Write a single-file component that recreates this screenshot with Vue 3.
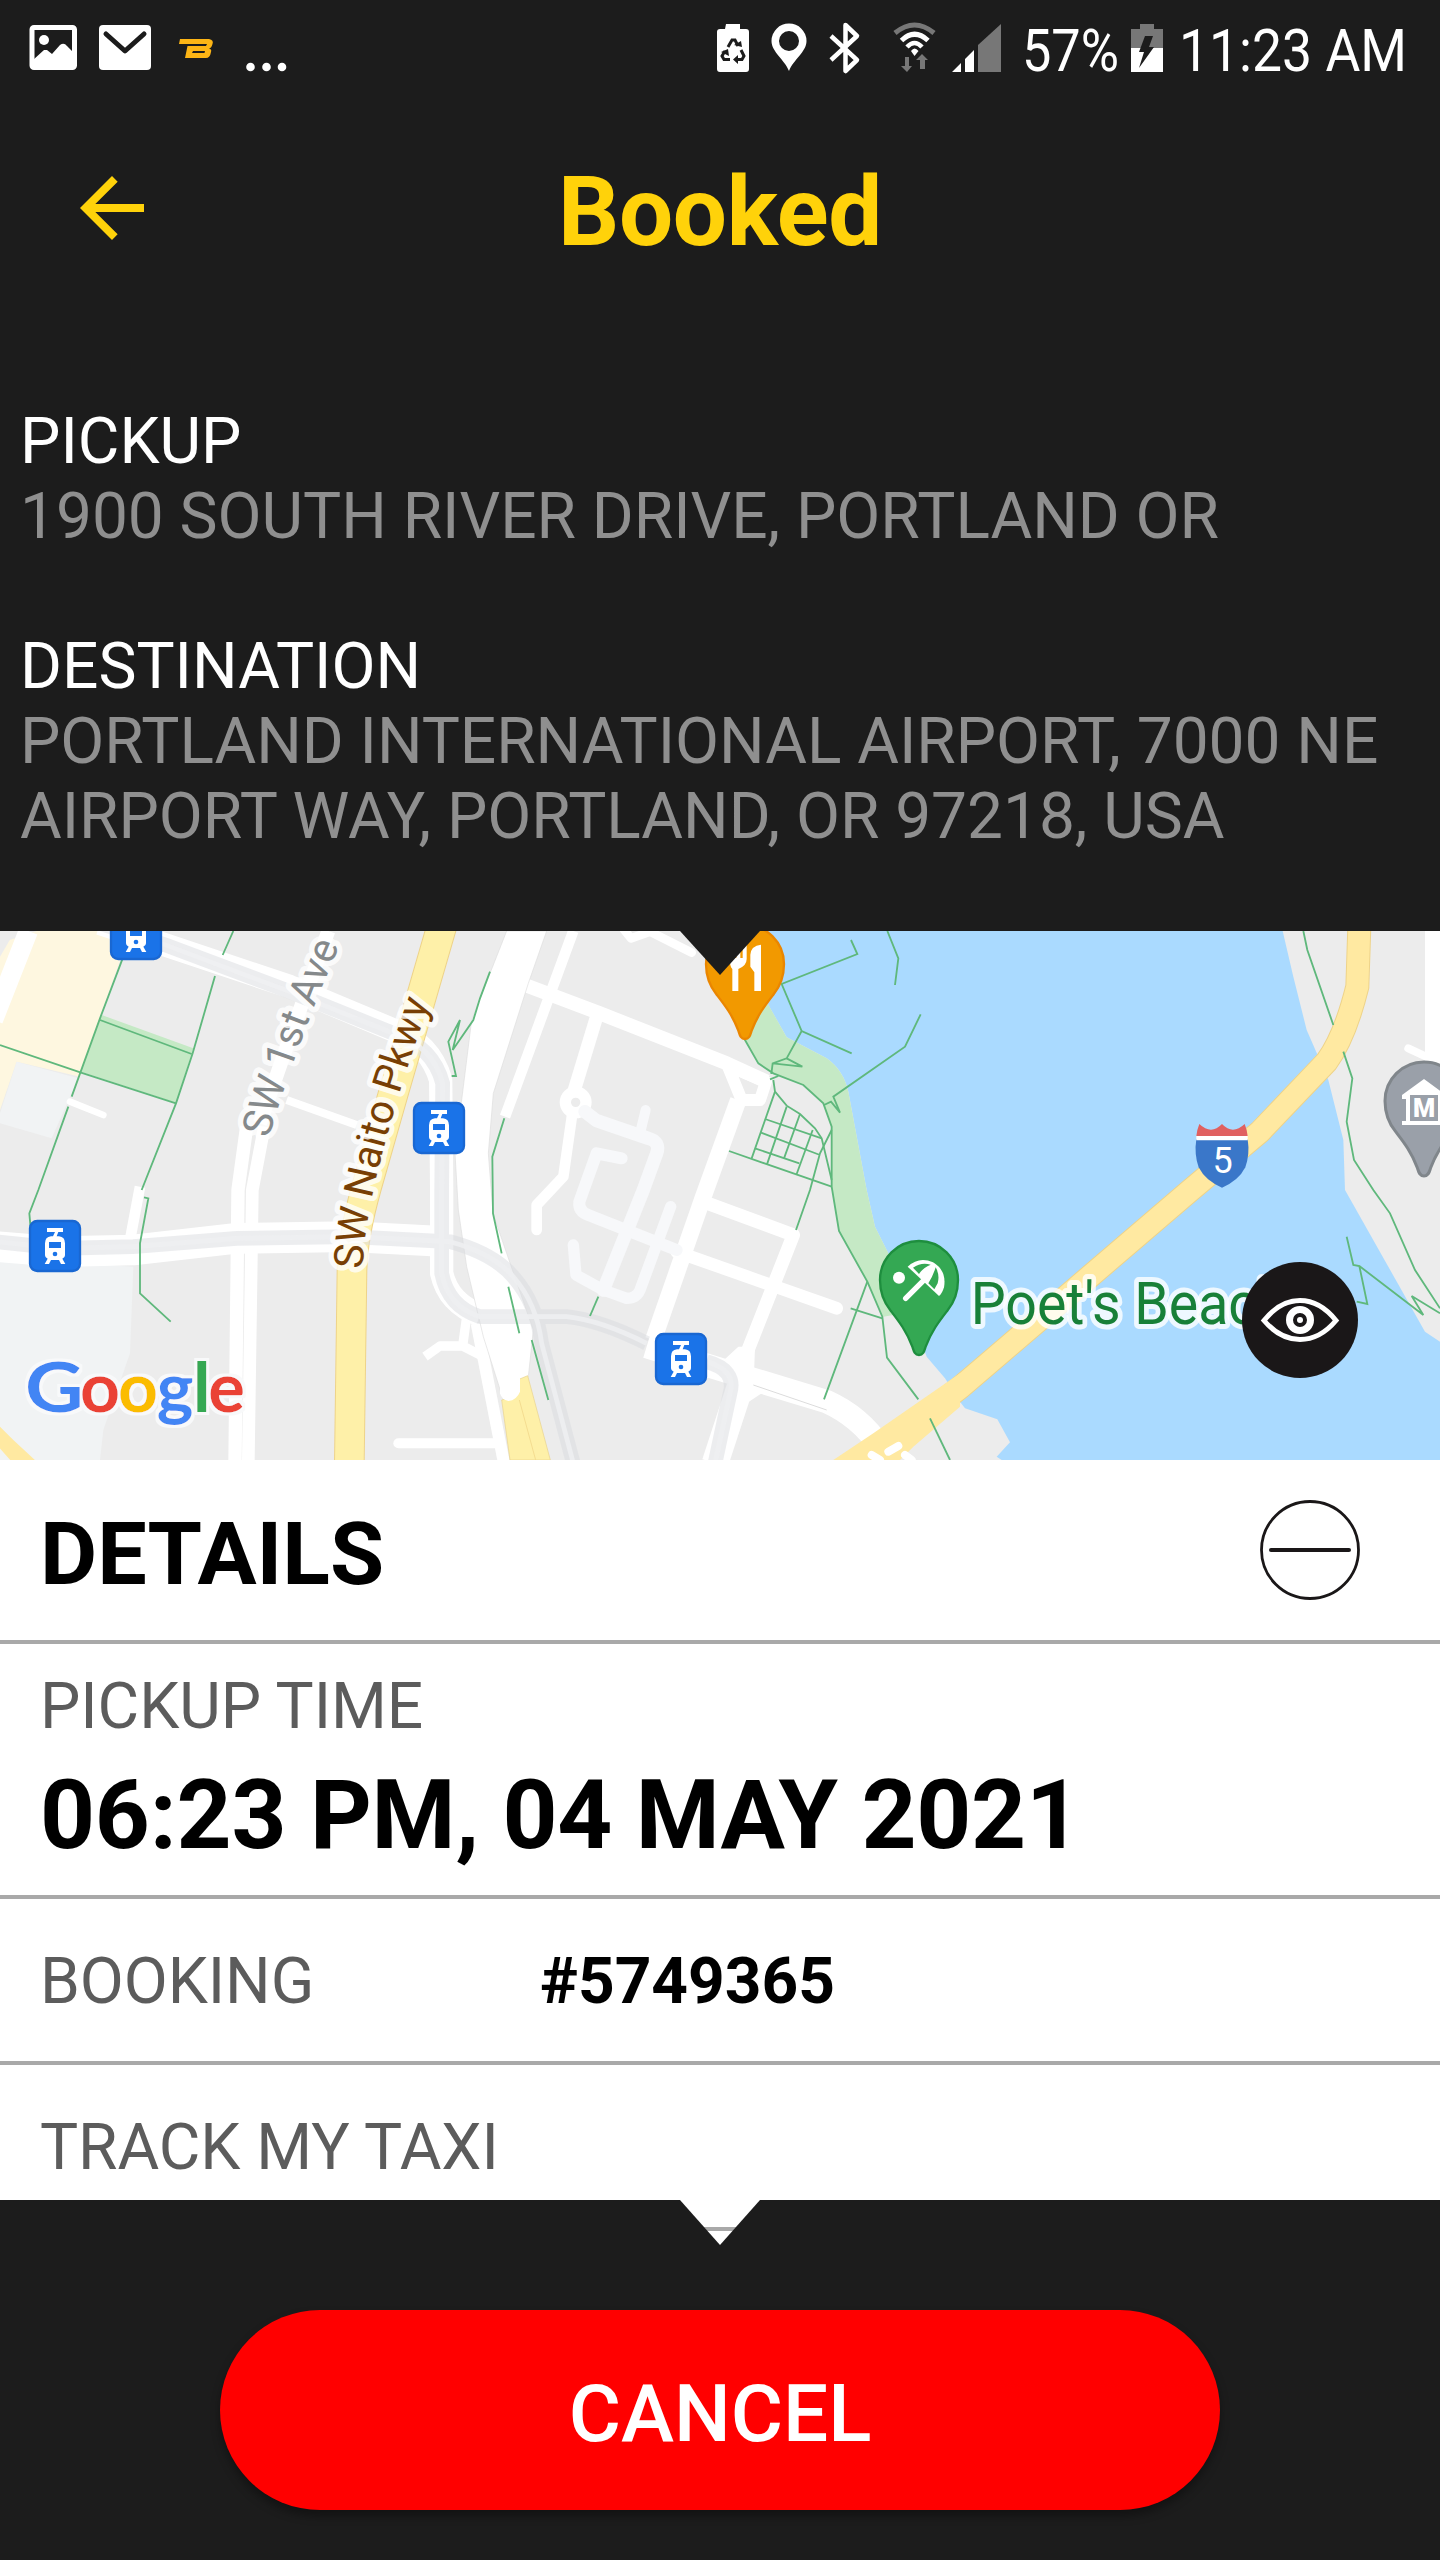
<template>
  <div class="screen">
    <div class="status-bar">
      <svg class="status-icons" viewBox="0 0 1440 96">
        <!-- notifications -->
        <rect x="32" y="27.500" width="42.500" height="40" rx="2" fill="none" stroke="#fff" stroke-width="5" />
        <path fill="#fff" d="M33 60 L44 50 L47 50 L52 54 L60 45 Q64 42 67 46 L74 53 L74 68 L33 68 Z" />
        <circle cx="44" cy="40" r="5" fill="#fff" />
        <rect x="99" y="25" width="52" height="45" rx="4" fill="#fff" />
        <path d="M106 34 L125 51 L144 34" fill="none" stroke="#1c1c1c" stroke-width="5" stroke-linecap="round" stroke-linejoin="round" />
        <path fill="#fdb515" fill-rule="evenodd" d="M180 39 H209 Q214 40 212.500 44 Q211.500 48 209 48.500 Q212 49 211 52 Q210 58 206 58 H185 L187.500 46 H206 L207 44 H179 Z M193 51 H205 L204.500 53 H192 Z" />
        <circle v-for="x in [250.500, 266.500, 282]" :key="x" :cx="x" cy="67" r="4.300" fill="#fff" />
        <!-- system -->
        <path fill="#fff" d="M726 24 H740 V29 H746 Q749 29 749 32 V69 Q749 72 746 72 H720 Q717 72 717 69 V32 Q717 29 720 29 H725 Z" />
        <g fill="none" stroke="#1c1c1c" stroke-width="3">
          <path d="M728 47 L732 40 H735 L738 46" />
          <path d="M741 50 L744 56 L742 59.500 H736" />
          <path d="M730 59.500 H724 L722 56 L725 51" />
        </g>
        <path fill="#1c1c1c" d="M734 45 L742 47 L741 41 Z M738 55 V64 L733 59.500 Z M721 52 L728 49 L729 56 Z" />
        <path fill="#fff" fill-rule="evenodd" d="M789 71 C785 60 771.500 52 771.500 41 A17.500 17.500 0 0 1 806.500 41 C806.500 52 793 60 789 71 Z M789 31 A9.500 9.500 0 1 0 789 51 A9.500 9.500 0 1 0 789 31 Z" />
        <path d="M831 36 L857 60 L845.500 71 V25 L857 36 L831 60" fill="none" stroke="#fff" stroke-width="4.500" stroke-linejoin="round" />
        <g fill="none">
          <path d="M895 33 Q914.500 17 934 33" stroke="#777" stroke-width="5" />
          <path d="M901.500 40.500 Q914.500 28 928 40.500" stroke="#fff" stroke-width="5" />
          <path d="M907 47 Q914.500 39 922 47" stroke="#fff" stroke-width="4.500" />
        </g>
        <path fill="#fff" d="M911 51 Q914.500 46 918.500 51 L914.500 56 Z" />
        <path fill="#777" d="M905 57 H909 V66 H912 L907 72 L901 66 H905 Z M920 69 V60 H916 L922 54 L928 60 H925 V69 Z" />
        <path fill="#777" d="M978 45 L1001 24 V72 H978 Z" />
        <path fill="#fff" d="M952 72 L961 63 V72 Z M965 59 L974 50 V72 H965 Z" />
        <path fill="#777" d="M1140 24 H1154 V29 H1163 V48 H1131 V29 H1140 Z" />
        <path fill="#fff" d="M1131 48 H1163 V72 H1131 Z" />
        <path fill="#1c1c1c" d="M1145 36 H1153 L1149 47 H1154 L1139 68 L1144 52 H1139 Z" />
        <text class="status-text" x="1022" y="71" textLength="97" lengthAdjust="spacingAndGlyphs">57%</text>
        <text class="status-text" x="1179" y="71" textLength="228" lengthAdjust="spacingAndGlyphs">11:23 AM</text>
      </svg>
    </div>

    <header class="toolbar">
      <button class="back" aria-label="Back">
        <svg viewBox="0 0 24 24">
          <path fill="#ffd20a" d="M20 11H7.830l5.590-5.590L12 4l-8 8 8 8 1.410-1.410L7.830 13H20v-2z" />
        </svg>
      </button>
      <h1>Booked</h1>
    </header>

    <section class="route">
      <div v-for="stop in stops" :key="stop.label" class="stop">
        <div class="stop-label">{{ stop.label }}</div>
        <div class="stop-address">{{ stop.address }}</div>
      </div>
    </section>

    <section class="map">
      <svg class="map-canvas" viewBox="0 33 4320 1587">
        <defs>
          <path id="pin" d="M0 225 C-14 225 -16 212 -20 200 C-38 152 -62 122 -85 92 C-108 64 -117 35 -117 0 A117 117 0 0 1 117 0 C117 35 108 64 85 92 C62 122 38 152 20 200 C16 212 14 225 0 225 Z" />
          <path id="first-ave" d="M806 656 Q890 370 1030 50" />
          <path id="naito" d="M1088 1048 C1093 860 1175 560 1310 190" />
          <filter id="halo" x="-10%" y="-20%" width="120%" height="140%">
            <feMorphology in="SourceAlpha" operator="dilate" radius="8" />
            <feGaussianBlur stdDeviation="2" result="grow" />
            <feFlood flood-color="#f8f9fa" />
            <feComposite in2="grow" operator="in" />
            <feMerge>
              <feMergeNode />
              <feMergeNode in="SourceGraphic" />
            </feMerge>
          </filter>
        </defs>

        <rect y="33" width="4320" height="1587" fill="#ececec" />
        <!-- blocks -->
        <path fill="#fef7e0" d="M110 33 H392 L300 290 L240 470 L50 425 L0 570 V70 Z" />
        <path fill="#ececec" d="M0 33 H45 L0 110 Z" />
        <path fill="#f1f3f4" d="M50 425 L235 475 L155 655 L0 610 V580 Z M0 1015 L400 1040 L390 1300 L310 1530 L300 1620 H0 Z" />
        <path fill="#c5e9c5" d="M305 285 L580 385 L528 548 L243 455 Z" />
        <!-- river -->
        <path fill="#aadaff" d="M2250 33 L2305 255 L2360 352 L2480 415 Q2530 450 2545 515 L2600 810 L2625 920 L2670 1010 L2780 1310 L2835 1375 L2880 1445 L2895 1465 L2992 1498 L3030 1567 L2990 1610 L3005 1620 H4320 V1265 L4275 1235 L4035 810 L4030 660 L3985 480 L3942 380 L3920 330 L3880 170 L3848 33 Z" />
        <path fill="#c5e9c5" d="M2180 200 L2300 245 L2360 352 L2480 415 Q2530 450 2545 515 L2600 810 L2625 920 L2665 1000 L2710 1180 L2650 1190 L2600 1085 L2515 930 L2495 800 V620 L2470 550 L2410 495 L2320 460 L2275 430 L2235 360 Z" />

        <!-- streets -->
        <g class="street">
          <path d="M85 33 L-20 300" stroke-width="58" />
          <path d="M210 545 L310 585" stroke-width="20" stroke-linecap="round" />
          <path d="M420 800 L390 960" stroke-width="32" />
          <path d="M-10 980 L180 995 L400 990 L710 955 L1050 950 L1340 965" stroke-width="92" />
          <path d="M300 10 L500 76 L870 200 L1180 330 Q1290 370 1322 480 L1325 810 V1060 Q1345 1150 1440 1185" stroke-width="70" />
          <path d="M985 33 L860 380 L780 610" stroke-width="42" />
          <path d="M740 620 L714 810 L705 1620" stroke-width="40" />
          <path d="M793 620 L757 810 L745 1620" stroke-width="38" />
          <path d="M860 540 L1070 615" stroke-width="24" />
          <path d="M1275 1310 L1320 1278 H1388 L1450 1310 M1400 1190 L1388 1278" stroke-width="28" />
          <path d="M1195 1570 H1500" stroke-width="30" stroke-linecap="round" />
          <path d="M1430 1210 L1512 1630" stroke-width="36" />
          <path d="M1720 33 L1515 590" stroke-width="32" />
          <path d="M1575 195 L1800 280 L2180 430 L2300 485" stroke-width="42" />
          <path d="M1790 290 L1720 520" stroke-width="40" />
          <circle cx="1727" cy="547" r="31" stroke-width="34" />
          <path d="M1717 580 L1690 770 L1610 855 V930" stroke-width="32" stroke-linecap="round" />
          <path d="M1865 20 L1893 55 L1950 35 L2075 98" stroke-width="26" stroke-linecap="round" />
          <path d="M2180 430 L2225 540 H2280 L2298 485 L2190 440" stroke-width="36" />
          <path d="M2215 540 L2110 830 L1960 1260" stroke-width="50" />
          <path d="M2110 845 L2380 945 L2240 1300 L2200 1370" stroke-width="40" />
          <path d="M2030 995 L2510 1165" stroke-width="38" stroke-linecap="round" />
          <path d="M1940 1280 L2200 1360 L2480 1445 Q2580 1490 2640 1580" stroke-width="70" />
          <path d="M2230 1370 L2145 1630" stroke-width="80" />
          <path d="M4300 33 V440" stroke-width="50" />
          <path d="M4225 385 L4300 420" stroke-width="24" stroke-linecap="round" />
        </g>
        <path fill="#fff" d="M2215 1280 L2265 1280 L2262 1365 L2330 1390 L2240 1450 L2150 1340 Z" />
        <path fill="#fff" stroke="#dedede" stroke-width="2" d="M1520 33 L1415 300 L1365 700 L1375 870 L1400 1040 L1450 1250 L1510 1440 L1545 1430 L1555 1380 L1585 1370 L1600 1230 L1520 1000 L1479 880 L1465 700 L1480 520 L1585 190 L1640 33 Z" />
        <path d="M2260 1395 L2480 1470" stroke="#dcdcdc" stroke-width="3" />
        <g fill="none" stroke="#f7f8fa" stroke-width="40" stroke-linecap="round" stroke-linejoin="round">
          <path d="M1755 575 L1790 602 L1945 655 Q1982 665 1970 700 L1930 810 L1810 1110" />
          <path d="M1920 640 L1937 570" stroke-width="30" />
          <path d="M1865 715 L1790 700 L1738 845 Q1735 875 1765 885 L2030 990" stroke-width="36" />
          <path d="M1720 975 L1728 1065 L1810 1110 L1880 1135 Q1910 1135 1920 1110 L2012 860" stroke-width="34" />
        </g>

        <!-- highways -->
        <g class="highway">
          <path class="casing" d="M1325 20 L1180 520 L1100 800 Q1058 950 1056 1050 L1048 1630" stroke-width="92" />
          <path class="fill" d="M1325 20 L1180 520 L1100 800 Q1058 950 1056 1050 L1048 1630" stroke-width="86" />
          <path class="casing" d="M2560 1650 L2880 1403 L3570 812 L3780 635 L3980 425 Q4035 350 4072 200 L4078 20" stroke-width="72" />
          <path class="fill deep" d="M2560 1650 L2880 1403 L3570 812 L3780 635 L3980 425 Q4035 350 4072 200 L4078 20" stroke-width="66" />
        </g>
        <path fill="#ffe9a1" d="M2500 1620 L2620 1540 L2880 1360 V1460 L2740 1580 L2700 1620 Z" />
        <path fill="#fef0a8" stroke="#e8d28c" stroke-width="2" d="M1505 1440 L1530 1620 H1651 L1583 1367 L1552 1380 L1543 1430 Z" />
        <path d="M1558 1440 L1607 1620" stroke="#f4dc90" stroke-width="3" />
        <path fill="#fff" d="M1500 1360 H1560 V1415 Q1550 1440 1525 1443 Q1505 1440 1500 1420 Z" />
        <path fill="#ffe9a1" d="M-5 1515 L40 1560 L110 1625 H35 L-5 1580 Z" />
        <path d="M2615 1605 L2640 1620 M2665 1595 L2695 1578 M2715 1605 L2735 1620" stroke="#fff" stroke-width="24" stroke-linecap="round" />

        <!-- bridges over the streets -->
        <g class="rail">
          <path v-for="(line, i) in railLines" :key="i" :d="line" />
        </g>
        <g class="rail rail--core">
          <path v-for="(line, i) in railLines" :key="i" :d="line" />
        </g>

        <!-- foot paths -->
        <g class="footpath">
          <path v-for="(path, i) in footPaths" :key="i" :d="path" />
        </g>

        <!-- labels -->
        <text class="label label--street" font-size="123">
          <textPath href="#first-ave">SW 1st Ave</textPath>
        </text>
        <text class="label label--parkway" font-size="123">
          <textPath href="#naito">SW Naito Pkwy</textPath>
        </text>
        <text class="label label--beach" transform="translate(2912 1213) scale(.945 1)" font-size="176">Poet's Beach</text>

        <!-- tram stops -->
        <g v-for="stop in tramStops" :key="stop.x" :transform="`translate(${stop.x} ${stop.y})`">
          <rect x="-75" y="-75" width="150" height="150" rx="22" fill="#1a73e8" stroke="#1967d2" stroke-width="7" />
          <path fill="#fff" d="M-24 -54 H24 V-42 H10 L5 -29 H12 Q30 -27 30 -8 V28 Q30 36 22 38 L31 54 H18 L12 42 H-12 L-18 54 H-31 L-22 38 Q-30 36 -30 28 V-8 Q-30 -27 -12 -29 H-6 L0 -42 H-24 Z" />
          <rect x="-18" y="-12" width="36" height="18" fill="#1a73e8" />
          <circle cy="24" r="7" fill="#1a73e8" />
        </g>

        <!-- interstate shield -->
        <g transform="translate(3666 612)">
          <path fill="#3a77c9" d="M-77 46 H77 Q84 90 70 130 Q50 170 0 191 Q-50 170 -70 130 Q-84 90 -77 46 Z" />
          <path fill="#fff" d="M-77 35 H77 V49 H-77 Z" />
          <path fill="#e06060" d="M-68 0 Q-32 34 0 0 Q32 34 68 0 Q76 20 77 36 H-77 Q-76 20 -68 0 Z" />
          <text x="2" y="146" font-size="108" fill="#fff" text-anchor="middle">5</text>
        </g>

        <!-- places -->
        <g transform="translate(2235 132)">
          <use href="#pin" fill="#f29900" stroke="#ea8600" stroke-width="7" />
          <path fill="#fff" d="M-45 -58 H-33 V-18 H-26 V-58 H-14 V-18 H-7 V-58 H5 V-15 Q5 5 -20 15 V81 H-38 V15 Q-45 8 -45 -10 Z M48 -58 V81 H28 V25 L16 8 V-28 Q18 -55 48 -58 Z" />
        </g>
        <g transform="translate(2757 1080)">
          <use href="#pin" fill="#34a853" stroke="#1e8e3e" stroke-width="7" />
          <circle cx="-60" cy="-7" r="18" fill="#fff" />
          <path d="M-40 55 L20 -5" stroke="#fff" stroke-width="16" stroke-linecap="round" />
          <path fill="#fff" d="M-34 -40 Q0 -72 42 -53 Q84 -28 75 22 Q70 40 60 48 Z" />
          <path fill="#34a853" d="M-18 -37 Q8 -55 35 -46 Q10 -35 0 -18 Z M50 -38 Q63 -15 56 10 L46 28 L28 10 Q42 -12 50 -38 Z" />
        </g>
        <g transform="translate(4272 543)">
          <use href="#pin" fill="#9aa0a9" stroke="#80868b" stroke-width="9" />
          <path fill="#fff" d="M-66 -18 L0 -66 L66 -18 V-6 H54 V60 H66 V72 H-66 V60 H-54 V-6 H-66 Z" />
          <rect x="-42" y="-18" width="84" height="78" fill="#9aa0a9" />
          <text x="0" y="47" font-size="76" font-weight="900" fill="#fff" text-anchor="middle">M</text>
        </g>

        <g class="google" filter="url(#halo)">
          <text
            v-for="l in logo"
            :key="l.x"
            :x="l.x"
            y="1477"
            :fill="l.color"
            :textLength="l.width"
            lengthAdjust="spacingAndGlyphs"
          >{{ l.char }}</text>
        </g>
      </svg>

      <button class="eye" aria-label="Toggle map view">
        <svg viewBox="0 0 116 116" fill="none" stroke="#fff">
          <path d="M22 58.500 Q38 38.500 58 38.500 Q78 38.500 94 58.500 Q78 77.500 58 77.500 Q38 77.500 22 58.500 Z" stroke-width="5" />
          <circle cx="58" cy="58" r="10.500" stroke-width="7" />
          <circle cx="58" cy="58" r="3" stroke="none" fill="#fff" />
        </svg>
      </button>
    </section>

    <section class="details">
      <div class="row row--head">
        <h2>DETAILS</h2>
        <svg class="collapse" viewBox="0 0 100 100" fill="none" stroke="#1a1718">
          <circle cx="50" cy="50" r="48.500" stroke-width="2.800" />
          <path d="M11 50 H89" stroke-width="4" stroke-linecap="round" />
        </svg>
      </div>
      <div class="row row--time">
        <span class="label-text">PICKUP TIME</span>
        <strong class="time">06:23 PM, 04 MAY 2021</strong>
      </div>
      <div class="row row--line">
        <span class="label-text label-text--fixed">BOOKING</span>
        <strong class="booking">#5749365</strong>
      </div>
      <div class="row row--line">
        <span class="label-text">TRACK MY TAXI</span>
      </div>
    </section>

    <footer class="actions">
      <button class="cancel">CANCEL</button>
    </footer>
  </div>
</template>

<script setup>
const stops = [
  { label: "PICKUP", address: "1900 SOUTH RIVER DRIVE, PORTLAND OR" },
  {
    label: "DESTINATION",
    address: "PORTLAND INTERNATIONAL AIRPORT, 7000 NE AIRPORT WAY, PORTLAND, OR 97218, USA",
  },
];

const tramStops = [
  { x: 408, y: 42 },
  { x: 1317, y: 624 },
  { x: 165, y: 978 },
  { x: 2043, y: 1317 },
];

const logo = [
  { char: "G", x: 75, width: 176, color: "#4285f4" },
  { char: "o", x: 240, width: 120, color: "#ea4335" },
  { char: "o", x: 354, width: 120, color: "#fbbc04" },
  { char: "g", x: 470, width: 110, color: "#4285f4" },
  { char: "l", x: 578, width: 54, color: "#34a853" },
  { char: "e", x: 625, width: 110, color: "#ea4335" },
];

const railLines = [
  "M300 10 L500 76 L870 215 L1180 340 Q1300 380 1328 490 L1325 810 V1060 Q1345 1160 1440 1190 H1700 Q1800 1200 1940 1270",
  "M-10 965 L180 985 L400 980 L710 955 L1050 950 L1350 965 Q1480 1000 1540 1070 Q1610 1150 1625 1270 L1720 1630",
  "M2120 1325 Q2210 1350 2190 1420 L2145 1630",
];

const footPaths = [
  "M370 110 L300 295 L215 530 M205 560 L115 810 L88 880 L92 925",
  "M700 33 L668 105 M645 168 L578 400 L528 550 L425 810",
  "M0 375 L243 458 L528 550 M300 300 L575 402",
  "M432 832 L445 835 L420 970 V1120 L512 1205",
  "M1470 155 L1440 235 L1420 300 L1358 390 L1380 300 L1345 365 L1368 468 H1355",
  "M1513 595 L1477 710 L1479 880 L1505 1000 M1525 1100 L1558 1240 M1595 1260 L1645 1440",
  "M1795 1130 L1770 1188",
  "M2553 60 L2572 102 L2345 192 L2405 333 L2555 400 M2405 333 L2360 415 L2318 430 L2314 462 M2360 415 L2407 440 L2318 430",
  "M2662 33 L2695 115 L2685 195",
  "M2762 283 L2715 380 L2500 530 L2520 578 L2493 545 L2472 555",
  "M2195 280 L2235 360 L2275 430 L2320 460 L2410 495 L2470 550 L2495 620 V800 L2517 933 L2602 1085 L2647 1190 L2661 1313 L2755 1438",
  "M2602 1085 L2472 1438 M2552 1165 L2647 1195 M2310 478 L2335 468",
  "M2320 480 L2325 515 L2360 557 L2400 582 L2445 625 L2465 655 L2495 780",
  "M2325 515 L2255 715 M2187 693 L2495 800 M2360 560 L2302 730 M2400 582 L2352 715 M2438 630 L2390 762",
  "M2295 597 L2465 655 M2283 638 L2460 705 M2265 685 L2398 730 M2495 630 L2460 700 L2430 810 L2388 930",
  "M2790 1495 L2850 1620",
  "M3910 33 L3922 90 L4000 315 M4030 395 L4057 475 L4040 605 L4062 720 L4120 810 L4170 880 L4245 1050 L4320 1165",
  "M4040 950 L4060 1035 L4078 1038 L4102 1152 L4070 1145 M4078 1038 L4270 1185 L4235 1128 L4320 1180",
];
</script>

<style>
body {
  background: #1c1c1c;
}
</style>

<style scoped>
.screen {
  display: flex;
  flex-direction: column;
  width: 1440px;
  height: 2560px;
  overflow: hidden;
  background: #1c1c1c;
  font-family: Roboto, "Liberation Sans", sans-serif;
}

button {
  padding: 0;
  border: none;
  font-family: inherit;
}

svg {
  display: block;
}

.status-bar {
  height: 96px;
}

.status-text {
  font-size: 60px;
  fill: #fff;
}

.toolbar {
  display: grid;
  grid-template-columns: 160px 1fr 160px;
  align-items: center;
  height: 224px;
}

.back {
  width: 96px;
  height: 96px;
  margin-left: 64px;
  background: none;
}

h1 {
  margin: 8px 0 0;
  color: #ffd20a;
  font-size: 96px;
  font-weight: 700;
  line-height: 112px;
  letter-spacing: -0.3px;
  text-align: center;
}

.route {
  display: flex;
  flex-direction: column;
  gap: 75px;
  box-sizing: border-box;
  height: 611px;
  padding: 84px 20px 0;
  font-size: 64px;
  line-height: 75px;
}

.stop-label {
  color: #fff;
}

.stop-address {
  color: #8f8f8f;
  letter-spacing: -0.03px;
}

.map {
  position: relative;
  height: 529px;
}

.map::before {
  content: "";
  position: absolute;
  top: 0;
  left: 680px;
  width: 80px;
  height: 44px;
  background: #1c1c1c;
  clip-path: polygon(0 0, 100% 0, 50% 100%);
}

.map-canvas {
  width: 1440px;
  height: 529px;
}

.street {
  fill: none;
  stroke: #fff;
  stroke-linejoin: round;
}

.highway {
  fill: none;
}

.casing {
  stroke: #eed389;
}

.fill {
  stroke: #fef0a8;
}

.deep {
  stroke: #ffe9a1;
}

.rail {
  fill: none;
  stroke: #dadce0;
  stroke-width: 44;
  opacity: 0.5;
}

.rail--core {
  stroke: #eff0f2;
  stroke-width: 14;
  opacity: 0.9;
}

.footpath {
  fill: none;
  stroke: #5fb87c;
  stroke-width: 5.5;
}

.label {
  paint-order: stroke;
  stroke: rgba(255, 255, 255, 0.8);
  stroke-width: 32;
  stroke-linejoin: round;
}

.label--street {
  fill: #85898b;
}

.label--parkway {
  fill: #783f04;
}

.label--beach {
  fill: #188038;
  stroke-width: 30;
}

.google {
  font-family: Lato, sans-serif;
  font-size: 208px;
  font-weight: 700;
}

.eye {
  position: absolute;
  top: 331px;
  left: 1242px;
  width: 116px;
  height: 116px;
  border-radius: 50%;
  background: #1a1718;
}

.details {
  height: 740px;
  overflow: hidden;
  background: #fff;
}

.row {
  display: flex;
  align-items: center;
  box-sizing: border-box;
  padding: 0 80px 0 40px;
  border-bottom: 4px solid #a9a9a9;
}

.row--line {
  height: 166px;
  padding-top: 2px;
}

.row--head {
  justify-content: space-between;
  height: 184px;
}

h2 {
  margin: 6px 0 0;
  color: #000;
  font-size: 88px;
  font-weight: 700;
}

.collapse {
  width: 100px;
  height: 100px;
}

.row--time {
  flex-direction: column;
  align-items: flex-start;
  justify-content: flex-start;
  height: 255px;
  padding-top: 25px;
}

.label-text {
  color: #5c5c5c;
  font-size: 64px;
  line-height: 75px;
  letter-spacing: -0.08px;
}

.label-text--fixed {
  width: 500px;
}

.time {
  margin-top: 15px;
  font-size: 96px;
  font-weight: 700;
  line-height: 112px;
  letter-spacing: -0.22px;
}

.booking {
  font-size: 64px;
  font-weight: 700;
}

.actions {
  position: relative;
  flex: 1;
  display: flex;
  justify-content: center;
  align-items: flex-start;
  padding-top: 110px;
  background: #1c1c1c;
}

/* arrow with the next divider showing through */
.actions::before {
  content: "";
  position: absolute;
  top: 0;
  left: 680px;
  width: 80px;
  height: 45px;
  background: linear-gradient(#fff 27px, #a9a9a9 27px, #a9a9a9 31px, #fff 31px);
  clip-path: polygon(0 0, 100% 0, 50% 100%);
}

.cancel {
  width: 1000px;
  height: 200px;
  padding-top: 8px;
  border-radius: 100px;
  background: #f00;
  box-shadow: 0 6px 10px rgba(0, 0, 0, 0.35);
  color: #fff;
  font-size: 80px;
  font-weight: 500;
}
</style>
